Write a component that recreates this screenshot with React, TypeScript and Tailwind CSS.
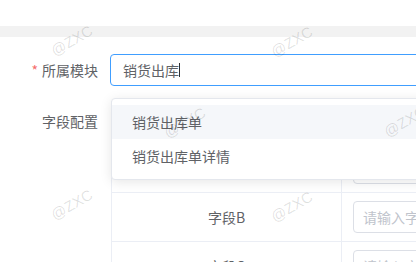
const marks = [
  { x: 72, y: 41 },
  { x: 292, y: 42 },
  { x: 185, y: 123 },
  { x: 405, y: 122 },
  { x: 72, y: 205 },
  { x: 292, y: 207 },
];

const rows = ['字段A', '字段B', '字段C'];

export default function App() {
  return (
    <div className="relative w-[416px] h-[262px] overflow-hidden bg-white text-[14px] text-[#606266] font-['Noto_Sans_CJK_SC',sans-serif]">
      <div className="h-[26px]" />
      <div className="h-[11px] bg-[#f2f2f2]" />

      <div className="pt-[17px]">
        <div className="flex h-8">
          <label className="w-[110px] shrink-0 pr-3 text-right leading-8 whitespace-nowrap">
            <span className="text-[#f56c6c] mr-1">*</span>所属模块
          </label>
          <div className="w-[400px] shrink-0 h-8 flex items-center pl-3 border border-[#409eff] rounded-[4px] whitespace-nowrap">
            <span className="text-[#606266]">销货出库</span>
            <span className="w-px h-[14px] bg-[#303133]" />
          </div>
        </div>

        <div className="flex mt-[15px]">
          <label className="w-[110px] shrink-0 pr-3 text-right leading-10 whitespace-nowrap">字段配置</label>
          <div className="ml-px w-[400px] shrink-0 border-l border-t border-[#ebeef5]">
            <div className="flex h-[42px] border-b border-[#ebeef5] bg-[#fafafa]">
              <div className="w-[230px] shrink-0 border-r border-[#ebeef5] flex items-center justify-center text-[#909399]">字段名称</div>
              <div className="flex-1" />
            </div>
            {rows.map(name => (
              <div key={name} className="flex h-[49px] border-b border-[#ebeef5]">
                <div className="w-[230px] shrink-0 border-r border-[#ebeef5] flex items-center justify-center">{name}</div>
                <div className="flex-1 flex items-center pl-[11px]">
                  <div className="w-[220px] h-8 flex items-center pl-[9px] border border-[#dcdfe6] rounded-[4px] text-[#c0c4cc] whitespace-nowrap">
                    请输入字段名称
                  </div>
                </div>
              </div>
            ))}
          </div>
        </div>
      </div>

      {/* select dropdown */}
      <div className="absolute left-[111px] top-[98px] w-[400px] py-[6px] bg-white border border-[#e4e7ed] rounded-[4px] shadow-[0_2px_12px_0_rgba(0,0,0,0.1)]">
        <div className="h-[34px] leading-[34px] px-5 bg-[#f5f7fa] whitespace-nowrap">销货出库单</div>
        <div className="h-[34px] leading-[34px] px-5 whitespace-nowrap">销货出库单详情</div>
      </div>

      {/* watermark */}
      <div className="absolute inset-0 pointer-events-none">
        {marks.map((m, i) => (
          <span
            key={i}
            className="absolute -translate-x-1/2 -translate-y-1/2 -rotate-[30deg] text-[15px] text-black/[0.12] font-['Liberation_Sans',sans-serif] whitespace-nowrap"
            style={{ left: m.x, top: m.y }}
          >
            @ZXC
          </span>
        ))}
      </div>
    </div>
  );
}
